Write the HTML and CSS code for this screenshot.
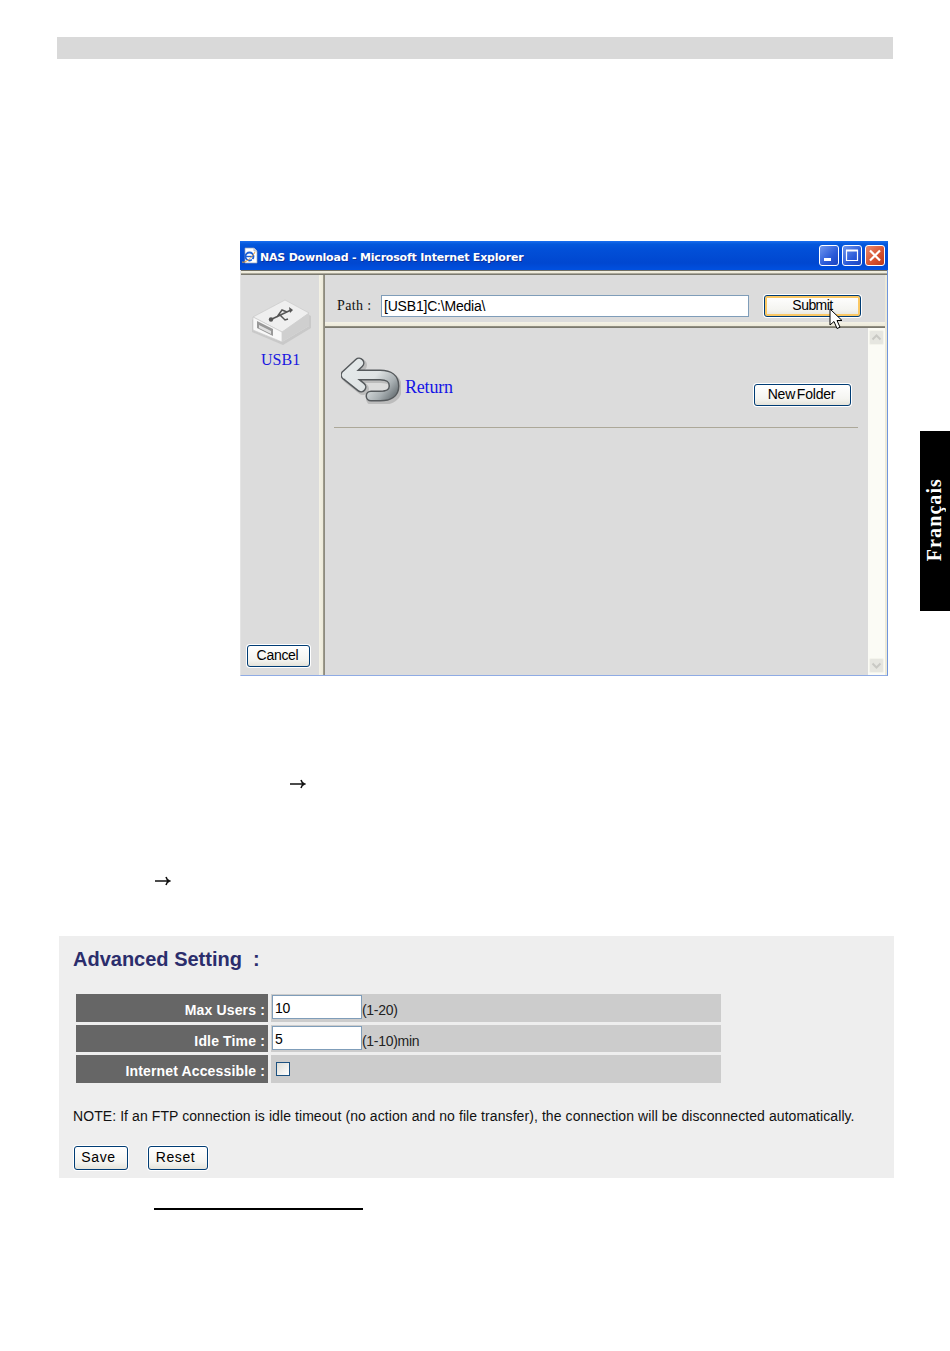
FILE: index.html
```html
<!DOCTYPE html>
<html lang="fr">
<head>
<meta charset="utf-8">
<title>NAS Download</title>
<link rel="stylesheet" href="styles.css">
</head>
<body>
<div class="page-head"></div>

<section class="window">
  <header class="titlebar">
    <svg class="ie-icon" viewBox="0 0 18 18" width="18" height="18">
      <path d="M4 1h9l3 3v12H4z" fill="#fff" stroke="#9aa4b8" stroke-width=".7"/>
      <path d="M13 1v3h3" fill="#dfe6f2" stroke="#9aa4b8" stroke-width=".7"/>
      <circle cx="8.500" cy="9.500" r="4" fill="none" stroke="#1d62d8" stroke-width="1.800"/>
      <path d="M5 9.500h7" stroke="#1d62d8" stroke-width="1.400"/>
      <path d="M12.500 12.500l-1.500 1" stroke="#fff" stroke-width="2"/>
      <path d="M1 15c3 1.500 10-4 13-10" fill="none" stroke="#e9a33c" stroke-width="1"/>
    </svg>
    <span class="title-text">NAS Download - Microsoft Internet Explorer</span>
    <div class="win-btns">
      <span class="win-btn"><svg viewBox="0 0 20 21" width="20" height="21"><rect x="5" y="13" width="7" height="3" fill="#fff"/></svg></span>
      <span class="win-btn"><svg viewBox="0 0 20 21" width="20" height="21"><path d="M4.500 5.500h11v10h-11z" fill="none" stroke="#fff" stroke-width="1.200"/><path d="M4 5.500h12" stroke="#fff" stroke-width="2"/></svg></span>
      <span class="win-btn win-close"><svg viewBox="0 0 20 21" width="20" height="21"><path d="M5 5.500l10 10M15 5.500l-10 10" stroke="#fff" stroke-width="2.200"/></svg></span>
    </div>
  </header>
  <div class="band"></div>
  <div class="frames">
    <aside class="sidebar">
      <svg class="usb-icon" viewBox="0 0 60 48" width="60" height="48">
        <path d="M1 22L33 4l27 14v12L32 47 1 34z" fill="#b5b5b5" opacity=".5"/>
        <path d="M34 2L2 19v13l29 12 27-16V15z" fill="#e2e2e2"/>
        <path d="M34 2L2 19l29 15 27-19z" fill="#efefef" stroke="#c4c4c4" stroke-width=".6"/>
        <path d="M2 19l29 15v10L2 32z" fill="#f8f8f8" stroke="#c4c4c4" stroke-width=".6"/>
        <path d="M31 34l27-19v13L31 44z" fill="#cfcfcf"/>
        <path d="M6 23l16 8v7L6 30z" fill="#999"/>
        <path d="M8 27l12 6v3L8 30z" fill="#e0e0e0"/>
        <path d="M21 21l19-9M26 19l5-7 5 2M29 17l5 5 3-1" fill="none" stroke="#555" stroke-width="1.500"/>
        <circle cx="20" cy="21.500" r="2.200" fill="#555"/>
        <path d="M38 9l4 3-3 3z" fill="#555"/>
      </svg>
      <a class="usb-link">USB1</a>
      <button class="btn btn-cancel" type="button">Cancel</button>
    </aside>
    <div class="vdiv"></div>
    <main class="main">
      <div class="pathbar">
        <span class="path-label">Path :</span>
        <div class="field field-path">[USB1]C:\Media\</div>
        <button class="btn btn-submit" type="button">Submit
          <svg class="cursor" viewBox="0 0 14 22" width="14" height="22"><path d="M1 1v16l4-3.500 3 7 3-1.300-3-6.700h5z" fill="#fff" stroke="#000" stroke-width="1"/></svg>
        </button>
      </div>
      <div class="hdiv"></div>
      <div class="content-wrap">
        <div class="content">
          <div class="return-row">
            <svg class="return-icon" viewBox="0 0 60 48" width="60" height="48">
              <defs>
                <linearGradient id="ret" gradientUnits="userSpaceOnUse" x1="8" y1="8" x2="50" y2="44">
                  <stop offset="0" stop-color="#e4e9ea"/>
                  <stop offset=".5" stop-color="#dfe3e4"/>
                  <stop offset=".8" stop-color="#a9b0b3"/>
                  <stop offset="1" stop-color="#6f777b"/>
                </linearGradient>
              </defs>
              <path d="M6 20H39Q54 20 54 31Q54 42 39 42H30M19 8L6 20L21 32" fill="none" stroke="#bcbcbc" stroke-width="12" stroke-linecap="round" stroke-linejoin="round" transform="translate(1 1)"/>
              <path d="M5 19H39Q53 19 53 30Q53 40 39 40H30M18 7L5 19L20 31" fill="none" stroke="#55595c" stroke-width="11" stroke-linecap="round" stroke-linejoin="round"/>
              <path d="M5 19H39Q53 19 53 30Q53 40 39 40H30M18 7L5 19L20 31" fill="none" stroke="url(#ret)" stroke-width="8" stroke-linecap="round" stroke-linejoin="round"/>
            </svg>
            <a class="return-link">Return</a>
            <button class="btn btn-folder" type="button">New Folder</button>
          </div>
          <div class="rule-line"></div>
        </div>
        <div class="scrollbar">
          <span class="sb-btn"><svg viewBox="0 0 15 15" width="15" height="15"><path d="M3.500 9.500l4-4 4 4" fill="none" stroke="#c9c9c4" stroke-width="2"/></svg></span>
          <span class="sb-btn"><svg viewBox="0 0 15 15" width="15" height="15"><path d="M3.500 5.500l4 4 4-4" fill="none" stroke="#c9c9c4" stroke-width="2"/></svg></span>
        </div>
      </div>
    </main>
    <div class="right-edge"></div>
  </div>
</section>

<svg class="arrow arrow-one" viewBox="0 0 16 12" width="16" height="12"><path d="M0 6h14.500M11 2c.4 1.800 1.500 3.200 3.500 4-2 .8-3.100 2.200-3.500 4" fill="none" stroke="#111" stroke-width="1.500"/></svg>
<svg class="arrow arrow-two" viewBox="0 0 16 12" width="16" height="12"><path d="M0 6h14.500M11 2c.4 1.800 1.500 3.200 3.500 4-2 .8-3.100 2.200-3.500 4" fill="none" stroke="#111" stroke-width="1.500"/></svg>

<section class="panel">
  <h2 class="panel-title">Advanced Setting&nbsp; :</h2>
  <div class="settings">
    <div class="s-label s-row-a">Max Users :</div>
    <div class="s-value s-row-a"><div class="field field-num">10</div><span class="hint">(1-20)</span></div>
    <div class="s-label s-row-b">Idle Time :</div>
    <div class="s-value s-row-b"><div class="field field-num">5</div><span class="hint">(1-10)min</span></div>
    <div class="s-label s-row-a">Internet Accessible :</div>
    <div class="s-value s-row-a"><span class="check"></span></div>
  </div>
  <p class="note">NOTE: If an FTP connection is idle timeout (no action and no file transfer), the connection will be disconnected automatically.</p>
  <div class="panel-btns">
    <button class="btn btn-save" type="button">Save</button>
    <button class="btn btn-reset" type="button">Reset</button>
  </div>
</section>

<div class="under-rule"></div>

<div class="lang-tab"><span class="lang-text">Français</span></div>
</body>
</html>
```

FILE: styles.css
```css
* { box-sizing: border-box; }
html, body { margin: 0; background: #fff; }
body {
  position: relative;
  min-height: 1351px;
  padding-top: 37px;
  font-family: "Liberation Sans", Arial, sans-serif;
  color: #000;
}
.page-head { height: 22px; margin-left: 57px; width: 836px; background: #d9d9d9; }

/* Buttons */
.btn {
  display: block; padding: 0 0 2px;
  font: 14px "Liberation Sans", Arial, sans-serif; color: #000;
  letter-spacing: -.2px;
  border: 1px solid #003c74; border-radius: 3px;
  background: linear-gradient(#fff, #f4f4f0 70%, #e4e3da);
  box-shadow: 0 0 0 1px #fff;
}

/* Browser window */
.window {
  width: 648px; height: 435px;
  margin: 182px 0 0 240px;
  background: #dcdcdc;
  border: 1px solid #6f95dc; border-top: 0; border-left-color: #e4e4e4; border-bottom-color: #8fabe4;
  display: flex; flex-direction: column;
}
.titlebar {
  height: 29px; margin: 0 -1px;
  display: flex; align-items: center;
  background: linear-gradient(#1a6ff0 0, #0458dc 3px, #0250d8 8px, #0047d0 22px, #0050e0 29px);
}
.ie-icon { margin: 0 1px 0 1px; flex: none; }
.title-text {
  font: bold 11px "DejaVu Sans", sans-serif;
  color: #fff; letter-spacing: -.2px; white-space: nowrap;
  text-shadow: 1px 1px 0 #0a2f9a;
  position: relative; top: 2px;
}
.win-btns { margin-left: auto; margin-right: 3px; display: flex; gap: 3px; }
.win-btn {
  width: 20px; height: 21px; display: block;
  border: 1px solid #fff; border-radius: 3px;
  background: linear-gradient(135deg, #6f96ee, #2a5ad8 60%, #1a44c0);
}
.win-btn svg { display: block; margin: -1px; }
.win-close { background: linear-gradient(135deg, #e98a6e, #d5512f 60%, #b9381a); }

.band {
  height: 5px; flex: none;
  background: linear-gradient(#716f64 1px, #f1efe2 1px, #ece9d8 3px, #aca899 3px, #aca899 4px, #7b7a70 4px);
}
.frames { flex: 1; display: flex; min-height: 0; }
.sidebar {
  width: 78px; padding: 23px 0 8px 6px;
  display: flex; flex-direction: column; align-items: flex-start;
}
.usb-icon { margin-left: 4px; display: block; }
.usb-link {
  margin: 4px 0 0 14px;
  font: 16px/20px "Liberation Serif", serif;
  color: #1a1ae0;
}
.btn-cancel { margin-top: auto; width: 63px; height: 22px; letter-spacing: -.3px; padding-right: 2px; }
.vdiv {
  width: 6px; flex: none;
  background: linear-gradient(90deg, #f4f2e6 0, #ece9d8 4px, #aca899 4px, #8d8b7e 5px);
}
.main { flex: 1; display: flex; flex-direction: column; min-width: 0; }
.right-edge { width: 2px; flex: none; background: #ece9d8; }

.pathbar { height: 47px; padding: 20px 0 0 12px; display: flex; align-items: flex-start; }
.path-label {
  width: 44px;
  font: 14px/22px "Liberation Serif", serif;
  letter-spacing: .35px;
  color: #111;
}
.field {
  background: #fff; border: 1px solid #7f9db9;
  font-size: 14px; color: #000; padding-left: 2px;
}
.field-path { width: 368px; height: 22px; line-height: 20px; letter-spacing: -.2px; }
.btn-submit {
  position: relative;
  margin-left: 15px; width: 97px; height: 22px;
  letter-spacing: -.55px;
  box-shadow: inset 0 0 0 2px #fbc864, 0 0 0 1px #fff;
}
.cursor { position: absolute; left: 64px; top: 12px; }
.hdiv {
  height: 6px; flex: none;
  background: linear-gradient(#f4f2e6 0, #ece9d8 4px, #9a988a 4px, #716f64 6px);
}
.content-wrap { flex: 1; display: flex; min-height: 0; }
.content { flex: 1; min-width: 0; padding: 28px 10px 0 9px; }
.return-row { height: 71px; display: flex; align-items: flex-start; padding: 0 7px; }
.return-icon { display: block; flex: none; }
.return-link {
  margin: 21px 0 0 4px;
  font: 18px/20px "Liberation Serif", serif;
  letter-spacing: -.2px;
  color: #1414e6;
}
.btn-folder { margin: 28px 0 0 auto; width: 97px; height: 22px; word-spacing: -2px; padding-right: 2px; }
.rule-line { height: 1px; background: #aca899; }

.scrollbar {
  width: 17px; flex: none;
  display: flex; flex-direction: column; justify-content: space-between;
  padding: 2px 1px;
  background: #fbfbf5;
}
.sb-btn {
  width: 15px; height: 15px; display: block;
  background: #e6e6e0; border: 1px solid #f4f4ec; border-radius: 2px;
}
.sb-btn svg { display: block; margin: -1px; }

/* Arrows */
.arrow { display: block; }
.arrow-one { margin: 102px 0 0 290px; }
.arrow-two { margin: 85px 0 0 155px; }

/* Settings panel */
.panel {
  width: 835px; height: 242px;
  margin: 49px 0 0 59px;
  padding: 9px 0 0 14px;
  background: #eee;
}
.panel-title {
  margin: 0; height: 49px;
  font: bold 20px/28px "Liberation Sans", Arial, sans-serif;
  color: #2b2d6c;
}
.settings {
  margin-left: 3px;
  display: grid;
  grid-template-columns: 192px 450px;
  grid-template-rows: 28px 27px 28px;
  gap: 3px;
}
.s-label {
  background: #666; color: #fff;
  font: bold 14px/32px "Liberation Sans", Arial, sans-serif;
  letter-spacing: .15px;
  text-align: right; padding-right: 3px;
}
.s-value { background: #ccc; display: flex; align-items: flex-start; padding: 1px 0 0 1px; }
.field-num { width: 90px; height: 24px; line-height: 24px; font-size: 14px; padding-left: 2px; letter-spacing: -.3px; }
.hint { font-size: 14px; line-height: 30px; letter-spacing: -.3px; color: #222; }
.check {
  width: 14px; height: 14px; margin: 6px 0 0 4px; display: block;
  border: 1px solid #1c5180;
  background: linear-gradient(135deg, #dcdcd7, #fff);
}
.note {
  margin: 23px 0 0; height: 20px;
  font-size: 14px; line-height: 20px; color: #111;
  white-space: nowrap; letter-spacing: .08px;
}
.panel-btns { margin: 20px 0 0 1px; display: flex; gap: 20px; }
.btn-save { width: 54px; height: 24px; letter-spacing: .7px; padding-right: 5px; }
.btn-reset { width: 60px; height: 24px; letter-spacing: .6px; padding-right: 5px; }

.under-rule { width: 209px; height: 2px; margin: 30px 0 0 154px; background: #000; }

/* Side language tab */
.lang-tab {
  position: absolute; top: 431px; right: 0;
  width: 30px; height: 180px;
  background: #000;
  display: flex; align-items: center; justify-content: center;
}
.lang-text {
  writing-mode: vertical-rl; transform: rotate(180deg);
  font: bold 20px "Liberation Serif", serif;
  letter-spacing: 1.1px;
  color: #fff;
  position: relative; top: -1px; left: -1px;
}
```
